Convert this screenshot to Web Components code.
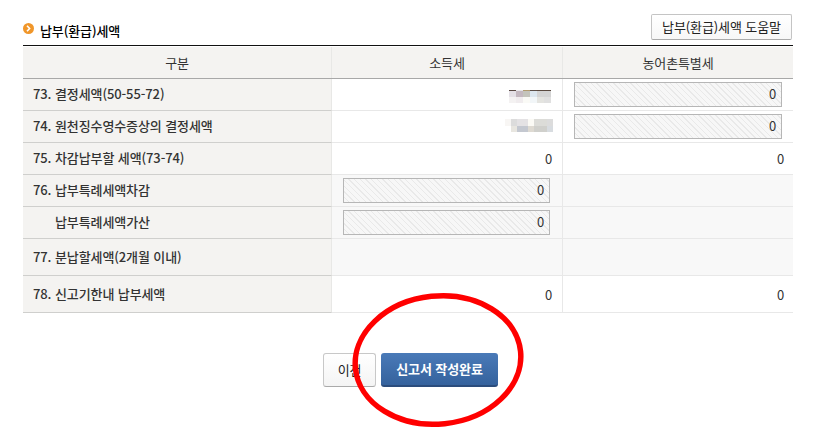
<!DOCTYPE html>
<html lang="ko">
<head>
<meta charset="utf-8">
<title>납부(환급)세액</title>
<style>
  html, body { margin: 0; background: #fff; }
  body {
    font-family: "Noto Sans CJK KR", "Noto Sans", sans-serif;
    font-size: 13px;
    letter-spacing: -0.1px;
    color: #333;
    width: 830px;
    height: 430px;
    overflow: hidden;
    position: relative;
  }
</style>
</head>
<body>
<tax-page>
  <section-head slot="head" help="납부(환급)세액 도움말">납부(환급)세액</section-head>
  <tax-table slot="table">
    <tax-row label="73. 결정세액(50-55-72)">
      <masked-value slot="a"></masked-value>
      <locked-field slot="b" wide>0</locked-field>
    </tax-row>
    <tax-row label="74. 원천징수영수증상의 결정세액">
      <masked-value slot="a" variant="2"></masked-value>
      <locked-field slot="b" wide>0</locked-field>
    </tax-row>
    <tax-row label="75. 차감납부할 세액(73-74)">
      <span slot="a">0</span>
      <span slot="b">0</span>
    </tax-row>
    <tax-row label="76. 납부특례세액차감" muted>
      <locked-field slot="a">0</locked-field>
    </tax-row>
    <tax-row label="납부특례세액가산" indent muted>
      <locked-field slot="a">0</locked-field>
    </tax-row>
    <tax-row label="77. 분납할세액(2개월 이내)" tall muted></tax-row>
    <tax-row label="78. 신고기한내 납부세액" tall>
      <span slot="a">0</span>
      <span slot="b">0</span>
    </tax-row>
  </tax-table>
  <action-bar slot="actions"></action-bar>
</tax-page>
<red-circle></red-circle>

<script>
// page frame
class TaxPage extends HTMLElement {
  constructor() {
    super();
    const shadow = this.attachShadow({mode: 'open'});
    shadow.innerHTML = `
    <style>
      :host { display: block; padding: 14px 37px 0 23px; }
      .actions { margin-top: 40px; }
    </style>
    <slot name="head"></slot>
    <slot name="table"></slot>
    <div class="actions"><slot name="actions"></slot></div>`;
  }
}

// title + help button
class SectionHead extends HTMLElement {
  constructor() {
    super();
    const shadow = this.attachShadow({mode: 'open'});
    shadow.innerHTML = `
    <style>
      :host { display: flex; align-items: flex-start; justify-content: space-between; height: 31px; }
      .title {
        display: flex;
        align-items: center;
        gap: 6px;
        margin-top: 7px;
        height: 18px;
        color: #000;
        font-weight: 500;
      }
      svg { display: block; margin-top: -3px; }
      button {
        box-sizing: border-box;
        width: 141px;
        height: 26px;
        margin-right: 1px;
        padding: 0 0 1px;
        background: linear-gradient(#fff, #f7f7f7);
        border: 1px solid #c4c4c4;
        border-bottom-color: #aaa;
        border-radius: 2px;
        font: inherit;
        font-weight: 400;
        letter-spacing: inherit;
        color: #222;
      }
    </style>
    <div class="title">
      <svg width="11" height="11" viewBox="0 0 11 11">
        <circle cx="5.5" cy="5.5" r="5.5" fill="#f0962a"/>
        <path d="M4 2.8 6.6 5.5 4 8.2" fill="none" stroke="#fff" stroke-width="1.6"/>
      </svg>
      <span><slot></slot></span>
    </div>
    <button></button>`;
    shadow.querySelector('button').textContent = this.getAttribute('help');
  }
}

// table with the header row
class TaxTable extends HTMLElement {
  constructor() {
    super();
    const shadow = this.attachShadow({mode: 'open'});
    shadow.innerHTML = `
    <style>
      :host { display: block; border-top: 1px solid #111; padding-top: 1px; }
      .head {
        display: grid;
        grid-template-columns: 309px 231px 230px;
        height: 31px;
        background: #f4f3f1;
        border-bottom: 1px solid #a8a8a8;
      }
      .head div {
        display: flex;
        align-items: center;
        justify-content: center;
        padding-bottom: 1px;
        border-right: 1px solid #e8e8e6;
      }
      .head div:last-child { border-right: 0; }
    </style>
    <div class="head"><div>구분</div><div>소득세</div><div>농어촌특별세</div></div>
    <slot></slot>`;
  }
}

// one row: label, income tax cell (a), rural tax cell (b)
class TaxRow extends HTMLElement {
  constructor() {
    super();
    const shadow = this.attachShadow({mode: 'open'});
    shadow.innerHTML = `
    <style>
      :host {
        display: grid;
        grid-template-columns: 309px 231px 230px;
        height: 32px;
      }
      :host([tall]) { height: 37px; }
      .label {
        display: flex;
        align-items: center;
        box-sizing: border-box;
        padding: 0 0 2px 10px;
        background: #f4f3f1;
        border-right: 1px solid #e8e8e6;
        border-bottom: 1px solid #cfcfcd;
        font-weight: 500;
        white-space: pre;
      }
      :host([indent]) .label { padding-left: 32px; }
      .cell {
        display: flex;
        align-items: center;
        justify-content: flex-end;
        box-sizing: border-box;
        padding-right: 10px;
        border-bottom: 1px solid #e8e8e8;
      }
      .a { border-right: 1px solid #e8e8e8; }
      .b { padding-right: 9px; }
      :host([muted]) .cell { background: #f8f8f8; }
    </style>
    <div class="label"></div>
    <div class="cell a"><slot name="a"></slot></div>
    <div class="cell b"><slot name="b"></slot></div>`;
    shadow.querySelector('.label').textContent = this.getAttribute('label');
  }
}

// read-only input with hatching
class LockedField extends HTMLElement {
  constructor() {
    super();
    const shadow = this.attachShadow({mode: 'open'});
    shadow.innerHTML = `
    <style>
      :host {
        display: flex;
        align-items: center;
        justify-content: flex-end;
        box-sizing: border-box;
        width: 207px;
        height: 25px;
        margin-right: 2px;
        padding: 0 5px 2px 0;
        border: 1px solid #b6b6b6;
        background: repeating-linear-gradient(45deg, #f7f7f7 0 3px, #e9e9e9 3px 4px);
      }
      :host([wide]) { width: 208px; }
    </style>
    <slot></slot>`;
  }
}

// amount that was pixelated out in the screenshot
const MASKS = {
  1: {
    box: 'margin: 4px 1px 0 0;',
    cols: [7, 7, 7, 7, 7, 7],
    rows: [
      ['#5a4a44', '#e6e4e8', '#b09a70', '#5c4f48', '#5a4a40', '#5a4a40'],
      ['#e4e0e6', '#c4b8c0', '#c4c4bc', '#dce6ee', '#d4d4d4', '#d4d4d4'],
      ['#f4f2f2', '#f0ecee', '#fafaf6', '#f2f6f8', '#e4e4e0', '#e0e0e0']
    ],
    heights: [1, 6, 6]
  },
  2: {
    box: 'margin: 0 -1px 2px 0;',
    cols: [6, 6, 11, 6, 13, 6],
    rows: [
      ['#f8f6f4', '#dcdcdc', '#e4e2e4', '#fbfaf5', '#dcdcd8', '#dcdcdc'],
      ['#ffffff', '#e8e6e0', '#c4c8d0', '#dedad2', '#d0d0cc', '#d8dce0']
    ],
    heights: [7, 6]
  }
};

class MaskedValue extends HTMLElement {
  constructor() {
    super();
    const shadow = this.attachShadow({mode: 'open'});
    const mask = MASKS[this.getAttribute('variant') || 1];
    const cells = mask.rows.flat().map(c => `<i style="background:${c}"></i>`).join('');
    shadow.innerHTML = `
    <style>
      :host {
        display: grid;
        grid-template-columns: ${mask.cols.map(w => w + 'px').join(' ')};
        grid-template-rows: ${mask.heights.map(h => h + 'px').join(' ')};
        ${mask.box}
      }
      i { display: block; }
    </style>
    ${cells}`;
  }
}

// buttons under the table
class ActionBar extends HTMLElement {
  constructor() {
    super();
    const shadow = this.attachShadow({mode: 'open'});
    shadow.innerHTML = `
    <style>
      :host { display: flex; justify-content: flex-start; gap: 5px; padding-left: 300px; }
      button {
        box-sizing: border-box;
        height: 34px;
        padding: 0 0 2px;
        border-radius: 3px;
        font: inherit;
        letter-spacing: inherit;
      }
      .prev {
        width: 53px;
        background: linear-gradient(#fff, #f4f4f4);
        border: 1px solid #c8c8c8;
        border-bottom-color: #aaa;
        color: #222;
      }
      .done {
        width: 117px;
        background: linear-gradient(#4a7ab8, #35629d);
        border: 0;
        border-bottom: 2px solid #2b4c7c;
        color: #fff;
        font-weight: 700;
      }
    </style>
    <button class="prev">이전</button>
    <button class="done">신고서 작성완료</button>`;
  }
}

// hand drawn marker over the buttons
class RedCircle extends HTMLElement {
  constructor() {
    super();
    const shadow = this.attachShadow({mode: 'open'});
    shadow.innerHTML = `
    <style>
      :host { position: absolute; left: 345px; top: 285px; width: 190px; height: 145px; pointer-events: none; }
      svg { display: block; }
    </style>
    <svg width="190" height="145" viewBox="0 0 190 145">
      <ellipse cx="93" cy="75" rx="83" ry="64" fill="none" stroke="#f00" stroke-width="5.5" transform="rotate(-6 93 75)"/>
    </svg>`;
  }
}

customElements.define('tax-page', TaxPage);
customElements.define('section-head', SectionHead);
customElements.define('tax-table', TaxTable);
customElements.define('tax-row', TaxRow);
customElements.define('locked-field', LockedField);
customElements.define('masked-value', MaskedValue);
customElements.define('action-bar', ActionBar);
customElements.define('red-circle', RedCircle);
</script>
</body>
</html>
